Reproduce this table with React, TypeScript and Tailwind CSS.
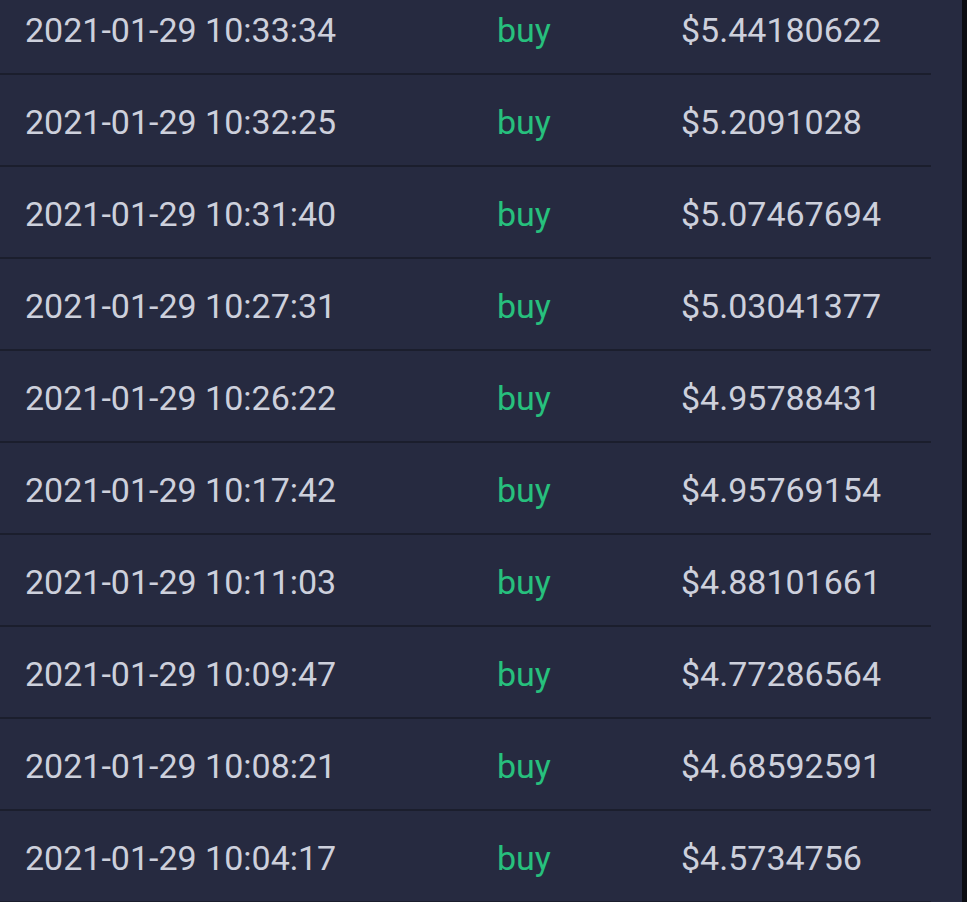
const trades = [
  { time: "2021-01-29 10:33:34", side: "buy", price: "$5.44180622" },
  { time: "2021-01-29 10:32:25", side: "buy", price: "$5.2091028" },
  { time: "2021-01-29 10:31:40", side: "buy", price: "$5.07467694" },
  { time: "2021-01-29 10:27:31", side: "buy", price: "$5.03041377" },
  { time: "2021-01-29 10:26:22", side: "buy", price: "$4.95788431" },
  { time: "2021-01-29 10:17:42", side: "buy", price: "$4.95769154" },
  { time: "2021-01-29 10:11:03", side: "buy", price: "$4.88101661" },
  { time: "2021-01-29 10:09:47", side: "buy", price: "$4.77286564" },
  { time: "2021-01-29 10:08:21", side: "buy", price: "$4.68592591" },
  { time: "2021-01-29 10:04:17", side: "buy", price: "$4.5734756" },
];

export default function App() {
  return (
    <div className="flex h-[902px] w-[967px] overflow-hidden bg-[#0c0d12] font-['Roboto',_'Noto_Sans',_sans-serif]">
      <div className="w-[962px] h-full bg-[#262a40]">
        <div className="w-[931px] -mt-[17px]">
          {trades.map((t) => (
            <div
              key={t.time}
              className="grid h-[92px] grid-cols-[472px_184px_1fr] items-center border-b-2 border-[#1b1e2d] pl-[25px] pt-[4px] text-[34px] leading-none"
            >
              <span className="text-[#cdd0dc]">{t.time}</span>
              <span className="text-[#27c07d]">{t.side}</span>
              <span className="text-[#cdd0dc]">{t.price}</span>
            </div>
          ))}
        </div>
      </div>
    </div>
  );
}
